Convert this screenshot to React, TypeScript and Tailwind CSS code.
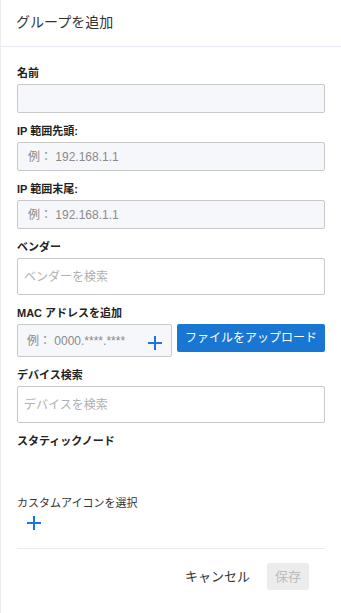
import type React from "react"

const font = { fontFamily: '"Liberation Sans", "Noto Sans CJK JP", sans-serif' }

function PlusIcon({ size = 14, className = "" }: { size?: number; className?: string }) {
  return (
    <svg width={size} height={size} viewBox="0 0 14 14" className={className}>
      <path d="M7 0v14M0 7h14" stroke="currentColor" strokeWidth="2" fill="none" />
    </svg>
  )
}

const Label: React.FC<{ children: React.ReactNode }> = ({ children }) => (
  <div className="mb-[3px] text-[11px] font-bold leading-[16px] text-[#222]">{children}</div>
)

const GrayInput: React.FC<{ placeholder?: string }> = ({ placeholder }) => (
  <div className="flex h-[29px] items-center rounded-[2px] border border-[#c9c9c9] bg-[#f5f7fa] pl-[10px] text-[12px] text-[#8a8a8a]">
    {placeholder}
  </div>
)

const SearchInput: React.FC<{ placeholder: string }> = ({ placeholder }) => (
  <div className="flex h-[37px] items-center rounded-[2px] border border-[#c9c9c9] bg-white pl-[6px] text-[12px] text-[#b0b0b0]">
    {placeholder}
  </div>
)

export default function App() {
  return (
    <div className="flex h-[613px] w-[341px] bg-white" style={font}>
      <div className="w-px shrink-0 bg-[#ededed]" />
      <div className="flex min-w-0 flex-1 flex-col">
        <div className="flex h-[47px] items-center border-b border-[#e6ebf3] pb-[2px] pl-[15px] text-[14px] text-[#333]">
          グループを追加
        </div>
        <div className="flex flex-col px-4 pt-[18px]">
          <div className="flex flex-col gap-[10px]">
            <div>
              <Label>名前</Label>
              <GrayInput />
            </div>
            <div>
              <Label>IP 範囲先頭:</Label>
              <GrayInput placeholder="例： 192.168.1.1" />
            </div>
            <div>
              <Label>IP 範囲末尾:</Label>
              <GrayInput placeholder="例： 192.168.1.1" />
            </div>
            <div>
              <Label>ベンダー</Label>
              <SearchInput placeholder="ベンダーを検索" />
            </div>
            <div>
              <Label>MAC アドレスを追加</Label>
              <div className="flex items-start gap-[5px]">
                <div className="flex h-[33px] w-[155px] items-center rounded-[2px] border border-[#c9c9c9] bg-[#f5f7fa] pl-[9px] pr-[9px] text-[12px] text-[#8a8a8a]">
                  <span className="flex-1">例： 0000.****.****</span>
                  <PlusIcon size={14} className="mt-[4px] text-[#1a73e8]" />
                </div>
                <button className="h-[28px] flex-1 rounded-[2px] bg-[#1976d2] text-[12px] text-white">
                  ファイルをアップロード
                </button>
              </div>
            </div>
            <div>
              <Label>デバイス検索</Label>
              <SearchInput placeholder="デバイスを検索" />
            </div>
            <div>
              <Label>スタティックノード</Label>
            </div>
          </div>
          <div className="mt-[43px] text-[11px] leading-[16px] text-[#333]">カスタムアイコンを選択</div>
          <div className="mt-[5px] pl-[10px]">
            <PlusIcon size={14} className="text-[#1a73e8]" />
          </div>
          <div className="mt-[18px] border-t border-[#e6ebf3]" />
          <div className="mt-[14px] flex items-center justify-end gap-[17px] pr-[16px]">
            <span className="text-[13px] text-[#333]">キャンセル</span>
            <button className="h-[27px] w-[42px] rounded-[3px] bg-[#ececec] text-[13px] text-[#bcbcbc]">保存</button>
          </div>
        </div>
      </div>
    </div>
  )
}
